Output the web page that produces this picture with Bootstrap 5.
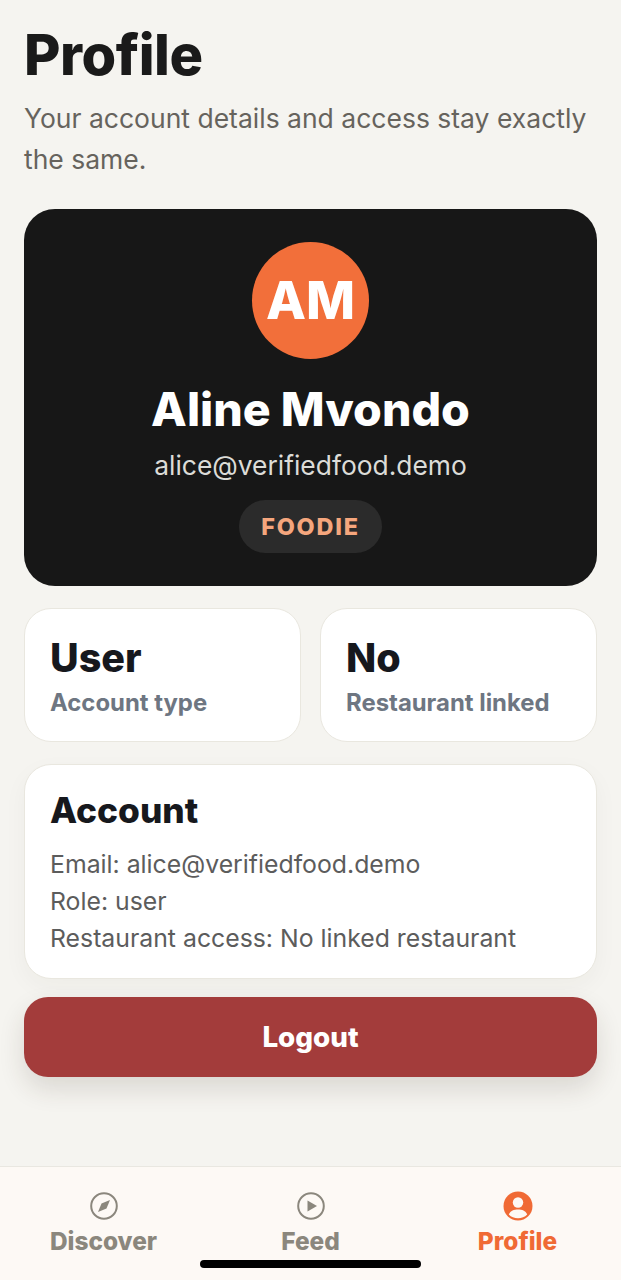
<!DOCTYPE html>
<html lang="en">
<head>
    <meta charset="UTF-8">
    <meta name="viewport" content="width=device-width, initial-scale=1.0">
    <title>Profile</title>
    <link rel="stylesheet" href="https://cdn.jsdelivr.net/npm/bootstrap@5.3.3/dist/css/bootstrap.min.css">
    <style>
        html, body { height: 100%; }
        body { background: #f5f4f0; font-family: Inter, "Liberation Sans", sans-serif; color: #1a1a1a; }
        .app-shell { height: 1280px; overflow: hidden; }
        .page-body { padding: 24px 24px 0; }
        .page-title { font-size: 56px; line-height: 62px; font-weight: 800; letter-spacing: -0.5px; margin: 0; color: #1a1a1a; }
        .page-sub { font-size: 26.5px; line-height: 41px; color: #66635d; margin: 12px 0 29px; }
        .hero-card { background: #171717; border-radius: 31px; height: 377px; padding-top: 33px; }
        .avatar-circle { width: 117px; height: 117px; background: #f26f3a; font-size: 52px; font-weight: 800; color: #fff; }
        .hero-name { font-size: 46.5px; line-height: 54px; font-weight: 800; color: #fff; margin: 23px 0 0; }
        .hero-mail { font-size: 26.4px; line-height: 36px; color: #dcdcd8; margin: 11px 0 17px; }
        .role-pill { background: #2b2b2b; color: #f5a67d; font-size: 23.4px; line-height: 53px; height: 53px; padding: 0 22px; font-weight: 800; letter-spacing: 1.8px; }
        .stat-row { gap: 19px; margin-top: 22px; }
        .stat-card { flex: 1 1 0; background: #fff; border: 1px solid #e9e7df; border-radius: 27px; height: 134px; padding: 24px 25px; }
        .stat-value { font-size: 39.5px; line-height: 50px; font-weight: 800; color: #16181d; }
        .stat-label { font-size: 23.9px; line-height: 30px; font-weight: 700; color: #6e7682; margin-top: 5px; }
        .account-card { background: #fff; border: 1px solid #e9e7df; border-radius: 27px; height: 215px; margin-top: 22px; padding: 24px 25px; box-shadow: 0 8px 24px rgba(60, 50, 30, .04); }
        .account-title { font-size: 35.3px; line-height: 44px; font-weight: 800; color: #16181d; margin: 0 0 13px; }
        .account-line { font-size: 24.8px; line-height: 37px; color: #5c5c5c; }
        .logout-btn { background: #a33c3b; border: 0; border-radius: 24px; height: 80px; margin-top: 18px; padding-top: 8px; font-size: 27.8px; font-weight: 800; color: #fff; box-shadow: 0 12px 26px rgba(60, 40, 30, .14); }
        .logout-btn:hover { background: #a33c3b; color: #fff; }
        .tab-bar { height: 114px; background: #fdf9f5; border-top: 1px solid #e9e7e1; position: absolute; left: 0; right: 0; bottom: 0; }
        .tab-item { width: 207px; padding-top: 24px; color: #8b877d; font-size: 24.4px; line-height: 34px; font-weight: 800; text-decoration: none; }
        .tab-item svg { display: block; margin-bottom: 3px; }
        .tab-on { color: #f06a35; }
        .home-bar { position: absolute; left: 200px; bottom: 12px; width: 221px; height: 8px; border-radius: 4px; background: #000; }
    </style>
</head>
<body>
    <div class="app-shell position-relative">
        <div class="page-body">
            <h1 class="page-title">Profile</h1>
            <p class="page-sub">Your account details and access stay exactly the same.</p>

            <div class="hero-card d-flex flex-column align-items-center text-center">
                <div class="avatar-circle rounded-circle d-flex align-items-center justify-content-center">AM</div>
                <h2 class="hero-name">Aline Mvondo</h2>
                <div class="hero-mail">alice@verifiedfood.demo</div>
                <span class="role-pill rounded-pill">FOODIE</span>
            </div>

            <div class="stat-row d-flex">
                <div class="stat-card">
                    <div class="stat-value">User</div>
                    <div class="stat-label">Account type</div>
                </div>
                <div class="stat-card">
                    <div class="stat-value">No</div>
                    <div class="stat-label">Restaurant linked</div>
                </div>
            </div>

            <div class="account-card">
                <h3 class="account-title">Account</h3>
                <div class="account-line">Email: alice@verifiedfood.demo</div>
                <div class="account-line">Role: user</div>
                <div class="account-line">Restaurant access: No linked restaurant</div>
            </div>

            <button class="btn logout-btn w-100" type="button">Logout</button>
        </div>

        <nav class="tab-bar d-flex">
            <a class="tab-item d-flex flex-column align-items-center" href="#">
                <svg width="30" height="30" viewBox="0 0 30 30">
                    <circle cx="15" cy="15" r="12.8" fill="none" stroke="#8b877d" stroke-width="2"/>
                    <path d="M21 9 L17.5 17.5 L9 21 L12.5 12.5 Z" fill="#8b877d"/>
                </svg>
                Discover
            </a>
            <a class="tab-item d-flex flex-column align-items-center" href="#">
                <svg width="30" height="30" viewBox="0 0 30 30">
                    <circle cx="15" cy="15" r="12.8" fill="none" stroke="#8b877d" stroke-width="2"/>
                    <path d="M11.5 9.5 L21 15 L11.5 20.5 Z" fill="#8b877d"/>
                </svg>
                Feed
            </a>
            <a class="tab-item tab-on d-flex flex-column align-items-center" href="#">
                <svg width="30" height="30" viewBox="0 0 30 30">
                    <circle cx="15" cy="15" r="14.5" fill="#f06a35"/>
                    <circle cx="15" cy="11.5" r="5.2" fill="#fdf9f5"/>
                    <path d="M5.8 23.5 C7.5 19.5 11 18.5 15 18.5 C19 18.5 22.5 19.5 24.2 23.5 C21.8 26 18.6 27.2 15 27.2 C11.4 27.2 8.2 26 5.8 23.5 Z" fill="#fdf9f5"/>
                </svg>
                Profile
            </a>
        </nav>
        <div class="home-bar"></div>
    </div>
    <script src="https://cdn.jsdelivr.net/npm/bootstrap@5.3.3/dist/js/bootstrap.bundle.min.js"></script>
</body>
</html>
